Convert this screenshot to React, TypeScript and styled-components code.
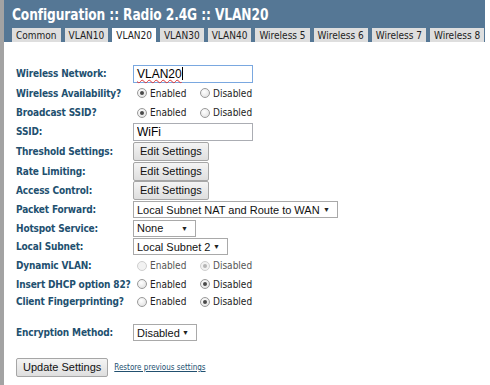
import React from 'react';
import styled, { createGlobalStyle } from 'styled-components';

const GlobalStyle = createGlobalStyle`
  html, body {
    margin: 0;
    padding: 0;
    background: #fff;
  }
  body {
    font-family: "DejaVu Sans Condensed", "DejaVu Sans", sans-serif;
  }
`;

const Page = styled.div`
  display: flex;
  width: 490px;
  height: 385px;
  overflow: hidden;
`;

const Strip = styled.div`
  width: 4px;
  flex-shrink: 0;
  background: #a3a3a3;
`;

const Main = styled.div`
  flex: 1;
  display: flex;
  flex-direction: column;
`;

const Header = styled.div`
  width: 481px;
  height: 42px;
  background: #557795;
  display: flex;
  flex-direction: column;
  justify-content: space-between;
  padding-left: 8px;
  box-sizing: border-box;
`;

const Title = styled.h1`
  margin: 0;
  padding-top: 3px;
  color: #fff;
  font-family: "DejaVu Sans Condensed", "DejaVu Sans", sans-serif;
  font-weight: bold;
  font-size: 13.6px;
  line-height: 22px;
  letter-spacing: -0.1px;
  transform: scaleY(1.22);
  transform-origin: left center;
  white-space: nowrap;
`;

const Tabs = styled.div`
  display: flex;
  gap: 4px;
`;

const Tab = styled.div<{ $active?: boolean }>`
  height: 14px;
  padding: 0 4px;
  background: ${({ $active }) => ($active ? '#fff' : '#dedede')};
  color: #222;
  font-size: 10px;
  line-height: 15px;
  white-space: nowrap;
`;

const Form = styled.div`
  padding: 22px 0 0 12px;
  display: flex;
  flex-direction: column;
`;

const Row = styled.div<{ $h: number; $gap?: number }>`
  display: grid;
  grid-template-columns: 117px auto;
  align-items: center;
  height: ${({ $h }) => $h}px;
  margin-top: ${({ $gap }) => $gap ?? 0}px;
`;

const Label = styled.div`
  color: #22506f;
  font-weight: bold;
  font-size: 10px;
  letter-spacing: -0.15px;
  white-space: nowrap;
`;

const Value = styled.div`
  display: flex;
  align-items: center;
`;

const TextInput = styled.input<{ $focus?: boolean }>`
  width: 120px;
  height: 18px;
  box-sizing: border-box;
  border: 1px solid ${({ $focus }) => ($focus ? '#7aa8e0' : '#abadb3')};
  padding: 0 3px;
  font-family: "Liberation Sans", Arial, sans-serif;
  font-size: 12px;
  color: #000;
  outline: none;
`;

const Squiggle = styled.span`
  text-decoration: underline wavy #e03030;
  text-decoration-thickness: 1px;
  text-underline-offset: 1px;
`;

const FakeInput = styled.div<{ $focus?: boolean }>`
  width: 120px;
  height: 18px;
  box-sizing: border-box;
  border: 1px solid ${({ $focus }) => ($focus ? '#7aa8e0' : '#abadb3')};
  padding: 0 3px;
  font-family: "Liberation Sans", Arial, sans-serif;
  font-size: 12px;
  line-height: 16px;
  color: #000;
  display: flex;
  align-items: center;
`;

const Caret = styled.span`
  display: inline-block;
  width: 1px;
  height: 13px;
  background: #000;
`;

const Button = styled.button`
  height: 19px;
  padding: 0 6px;
  border: 1px solid #a6a6a6;
  border-radius: 2px;
  background: linear-gradient(#f4f4f4, #dedede);
  font-family: "Liberation Sans", Arial, sans-serif;
  font-size: 11px;
  color: #111;
  line-height: 15px;
  white-space: nowrap;
`;

const RadioGroup = styled.div`
  display: flex;
  padding-left: 4px;
`;

const RadioItem = styled.label<{ $disabled?: boolean }>`
  display: flex;
  align-items: center;
  width: 63px;
  font-size: 10px;
  color: ${({ $disabled }) => ($disabled ? '#555' : '#222')};
`;

const RadioDot = styled.span<{ $checked?: boolean; $disabled?: boolean }>`
  width: 10px;
  height: 10px;
  margin-right: 3px;
  border-radius: 50%;
  box-sizing: border-box;
  border: 1px solid ${({ $disabled }) => ($disabled ? '#cfcfcf' : '#9a9a9a')};
  background: ${({ $disabled }) =>
    $disabled ? '#f2f2f2' : 'radial-gradient(circle at 40% 35%, #fff, #dcdcdc)'};
  display: flex;
  align-items: center;
  justify-content: center;

  &::after {
    content: '';
    display: ${({ $checked }) => ($checked ? 'block' : 'none')};
    width: 4px;
    height: 4px;
    border-radius: 50%;
    background: ${({ $disabled }) => ($disabled ? '#b5b5b5' : '#4a4a4a')};
  }
`;

const SelectBox = styled.div<{ $w: number }>`
  width: ${({ $w }) => $w}px;
  height: 17px;
  box-sizing: border-box;
  border: 1px solid #a9a9a9;
  background: #fff;
  display: flex;
  align-items: center;
  justify-content: space-between;
  padding: 0 7px 0 3px;
  font-family: "Liberation Sans", Arial, sans-serif;
  font-size: 11px;
  color: #111;
  white-space: nowrap;
`;

const Arrow = styled.span`
  font-size: 7px;
  color: #222;
`;

const Footer = styled.div`
  display: flex;
  align-items: center;
  gap: 6px;
  margin-top: 16px;
`;

const RestoreLink = styled.a`
  font-size: 8px;
  color: #22506f;
  text-decoration: underline;
`;

const tabs = ['Common', 'VLAN10', 'VLAN20', 'VLAN30', 'VLAN40', 'Wireless 5', 'Wireless 6', 'Wireless 7', 'Wireless 8'];

const Radios = ({ on, disabled }: { on: boolean; disabled?: boolean }) => (
  <RadioGroup>
    <RadioItem $disabled={disabled}>
      <RadioDot $checked={on} $disabled={disabled} />
      Enabled
    </RadioItem>
    <RadioItem $disabled={disabled}>
      <RadioDot $checked={!on} $disabled={disabled} />
      Disabled
    </RadioItem>
  </RadioGroup>
);

const Select = ({ text, w }: { text: string; w: number }) => (
  <SelectBox $w={w}>
    <span>{text}</span>
    <Arrow>▼</Arrow>
  </SelectBox>
);

export default function App() {
  return (
    <Page>
      <GlobalStyle />
      <Strip />
      <Main>
        <Header>
          <Title>Configuration :: Radio 2.4G :: VLAN20</Title>
          <Tabs>
            {tabs.map((t) => (
              <Tab key={t} $active={t === 'VLAN20'}>{t}</Tab>
            ))}
          </Tabs>
        </Header>
        <Form>
          <Row $h={19}>
            <Label>Wireless Network:</Label>
            <Value>
              <FakeInput $focus>
                <Squiggle>VLAN20</Squiggle>
                <Caret />
              </FakeInput>
            </Value>
          </Row>
          <Row $h={20}>
            <Label>Wireless Availability?</Label>
            <Radios on />
          </Row>
          <Row $h={19}>
            <Label>Broadcast SSID?</Label>
            <Radios on />
          </Row>
          <Row $h={19}>
            <Label>SSID:</Label>
            <Value>
              <TextInput defaultValue="WiFi" />
            </Value>
          </Row>
          <Row $h={20}>
            <Label>Threshold Settings:</Label>
            <Value><Button>Edit Settings</Button></Value>
          </Row>
          <Row $h={20}>
            <Label>Rate Limiting:</Label>
            <Value><Button>Edit Settings</Button></Value>
          </Row>
          <Row $h={19}>
            <Label>Access Control:</Label>
            <Value><Button>Edit Settings</Button></Value>
          </Row>
          <Row $h={19}>
            <Label>Packet Forward:</Label>
            <Value><Select text="Local Subnet NAT and Route to WAN" w={205} /></Value>
          </Row>
          <Row $h={18}>
            <Label>Hotspot Service:</Label>
            <Value><Select text="None" w={63} /></Value>
          </Row>
          <Row $h={19}>
            <Label>Local Subnet:</Label>
            <Value><Select text="Local Subnet 2" w={95} /></Value>
          </Row>
          <Row $h={19}>
            <Label>Dynamic VLAN:</Label>
            <Radios on={false} disabled />
          </Row>
          <Row $h={18}>
            <Label>Insert DHCP option 82?</Label>
            <Radios on={false} />
          </Row>
          <Row $h={17}>
            <Label>Client Fingerprinting?</Label>
            <Radios on={false} />
          </Row>
          <Row $h={19} $gap={13}>
            <Label>Encryption Method:</Label>
            <Value><Select text="Disabled" w={64} /></Value>
          </Row>
          <Footer>
            <Button>Update Settings</Button>
            <RestoreLink href="#">Restore previous settings</RestoreLink>
          </Footer>
        </Form>
      </Main>
    </Page>
  );
}
